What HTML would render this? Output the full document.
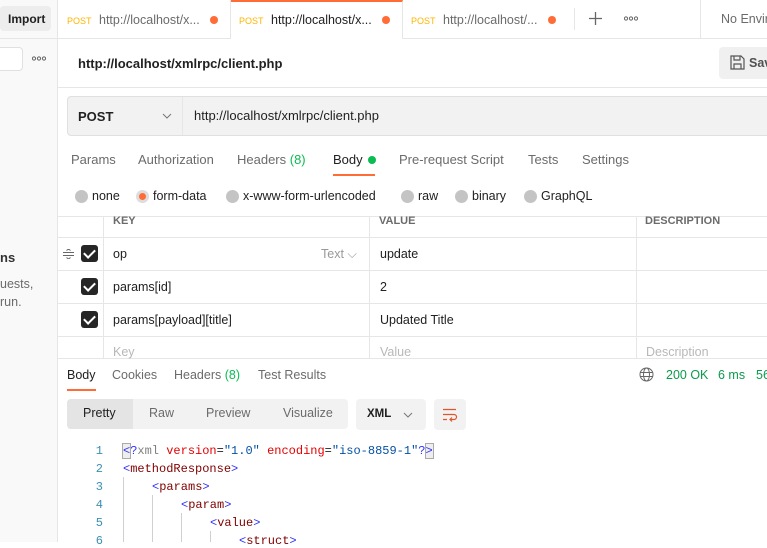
<!DOCTYPE html>
<html><head><meta charset="utf-8"><style>
*{box-sizing:border-box;margin:0;padding:0}
body{width:767px;height:542px;overflow:hidden;font-family:"Liberation Sans",sans-serif;font-size:12.5px;color:#212121;background:#fff;position:relative}
.a{position:absolute;white-space:nowrap}
.g{color:#6b6b6b}
.line{position:absolute;background:#e6e6e6}
.dot{display:inline-block;width:8px;height:8px;border-radius:50%;background:#ff6c37}
.rad{position:absolute;width:13px;height:13px;border-radius:50%;background:#c4c4c4}
.cb{position:absolute;left:81px;width:17px;height:17px;border-radius:3px;background:#262626}
.cb:after{content:"";position:absolute;left:5px;top:2px;width:5px;height:9px;border:solid #fff;border-width:0 2px 2px 0;transform:rotate(45deg)}
.mono{font-family:"Liberation Mono",monospace;font-size:12px}
.num{position:absolute;width:30px;left:73px;text-align:right;color:#3a8fb0}
.tg{color:#800000}.bl{color:#3030ff}.rd{color:#e50000}.st{color:#0451a5}
</style></head><body>
<!-- sidebar -->
<div class="a" style="left:0;top:0;width:58px;height:542px;background:#f9f9f9;border-right:1px solid #e6e6e6"></div>
<div class="a" style="left:0;top:6px;width:51px;height:25px;background:#ededed;border-radius:4px;font-weight:bold;font-size:12px;padding:6px 0 0 8px">Import</div>
<div class="line" style="left:0;top:38px;width:58px;height:1px"></div>
<div class="a" style="left:-4px;top:47px;width:27px;height:24px;border:1px solid #e0e0e0;border-radius:4px;background:#fff"></div>
<svg class="a" style="left:32px;top:56px" width="14" height="5" fill="none" stroke="#666"><circle cx="2" cy="2.5" r="1.6"/><circle cx="7" cy="2.5" r="1.6"/><circle cx="12" cy="2.5" r="1.6"/></svg>
<div class="a" style="left:0;top:250px;font-weight:bold;font-size:13px;color:#333">ns</div>
<div class="a g" style="left:0;top:277px">uests,</div>
<div class="a g" style="left:0;top:295px">run.</div>
<!-- tab bar -->
<div class="line" style="left:58px;top:38px;width:709px;height:1px"></div>
<div class="a" style="left:59px;top:0;width:172px;height:38px;border-right:1px solid #e6e6e6;padding:13px 0 0 8px"><span style="color:#ffb400;font-size:9px">POST</span> <span class="g" style="margin-left:4px">http://localhost/x...</span><span class="dot" style="margin-left:10px"></span></div>
<div class="a" style="left:231px;top:0;width:172px;height:39px;background:#fff;border-top:2px solid #ff6c37;border-right:1px solid #e6e6e6;padding:11px 0 0 8px"><span style="color:#ffb400;font-size:9px">POST</span> <span style="margin-left:4px">http://localhost/x...</span><span class="dot" style="margin-left:10px"></span></div>
<div class="a" style="left:403px;top:0;width:172px;height:38px;padding:13px 0 0 8px"><span style="color:#ffb400;font-size:9px">POST</span> <span class="g" style="margin-left:4px">http://localhost/...</span><span class="dot" style="margin-left:10px"></span></div>
<div class="line" style="left:574px;top:8px;width:1px;height:22px"></div>
<svg class="a" style="left:589px;top:12px" width="13" height="13" stroke="#666" stroke-width="1.3"><path d="M6.5 0v13M0 6.5h13"/></svg>
<svg class="a" style="left:624px;top:16px" width="14" height="5" fill="none" stroke="#666"><circle cx="2" cy="2.5" r="1.6"/><circle cx="7" cy="2.5" r="1.6"/><circle cx="12" cy="2.5" r="1.6"/></svg>
<div class="line" style="left:700px;top:0;width:1px;height:38px"></div>
<div class="a g" style="left:721px;top:12px">No Enviro</div>
<!-- title -->
<div class="a" style="left:78px;top:56px;font-weight:bold;font-size:13px">http://localhost/xmlrpc/client.php</div>
<div class="a" style="left:719px;top:47px;width:60px;height:32px;background:#f0f0f0;border-radius:4px;padding:9px 0 0 30px;font-weight:bold;color:#505050">Sav</div>
<svg class="a" style="left:730px;top:55px" width="15" height="15" viewBox="0 0 15 15" fill="none" stroke="#555" stroke-width="1.2"><path d="M1 1h10l3 3v10H1z M4 1v4h6V1 M4 14V9h7v5"/></svg>
<div class="line" style="left:58px;top:87px;width:709px;height:1px"></div>
<!-- url -->
<div class="a" style="left:67px;top:96px;width:710px;height:40px;background:#f2f2f2;border:1px solid #e0e0e0;border-radius:4px"></div>
<div class="line" style="left:182px;top:97px;width:1px;height:38px"></div>
<div class="a" style="left:78px;top:109px;font-weight:bold;font-size:13px">POST</div>
<svg class="a" style="left:162px;top:113px" width="10" height="7"><path d="M1 1l4 4 4-4" fill="none" stroke="#777"/></svg>
<div class="a" style="left:194px;top:108px;font-size:13px">http://localhost/xmlrpc/client.php</div>
<!-- req tabs -->
<div class="a g" style="left:71px;top:152px;font-size:13px">Params</div>
<div class="a g" style="left:138px;top:152px;font-size:13px">Authorization</div>
<div class="a g" style="left:237px;top:152px;font-size:13px">Headers <span style="color:#0cbb52">(8)</span></div>
<div class="a" style="left:333px;top:152px;font-size:13px">Body <span class="dot" style="background:#0cbb52;margin-left:2px"></span></div>
<div class="a" style="left:333px;top:174px;width:42px;height:2px;background:#ff6c37"></div>
<div class="a g" style="left:399px;top:152px;font-size:13px">Pre-request Script</div>
<div class="a g" style="left:528px;top:152px;font-size:13px">Tests</div>
<div class="a g" style="left:582px;top:152px;font-size:13px">Settings</div>
<!-- radios -->
<div class="rad" style="left:75px;top:190px"></div><div class="a" style="left:92px;top:189px">none</div>
<div class="rad" style="left:136px;top:190px;background:#ddd"><div style="margin:3px;width:7px;height:7px;border-radius:50%;background:#ff6c37"></div></div><div class="a" style="left:153px;top:189px">form-data</div>
<div class="rad" style="left:226px;top:190px"></div><div class="a" style="left:243px;top:189px">x-www-form-urlencoded</div>
<div class="rad" style="left:401px;top:190px"></div><div class="a" style="left:418px;top:189px">raw</div>
<div class="rad" style="left:455px;top:190px"></div><div class="a" style="left:472px;top:189px">binary</div>
<div class="rad" style="left:524px;top:190px"></div><div class="a" style="left:541px;top:189px">GraphQL</div>
<!-- table -->
<div class="line" style="left:58px;top:216px;width:709px;height:1px"></div>
<div class="line" style="left:58px;top:237px;width:709px;height:1px"></div>
<div class="line" style="left:58px;top:270px;width:709px;height:1px"></div>
<div class="line" style="left:58px;top:303px;width:709px;height:1px"></div>
<div class="line" style="left:58px;top:336px;width:709px;height:1px"></div>
<div class="line" style="left:58px;top:358px;width:709px;height:1px"></div>
<div class="line" style="left:103px;top:216px;width:1px;height:142px"></div>
<div class="line" style="left:369px;top:216px;width:1px;height:142px"></div>
<div class="line" style="left:636px;top:216px;width:1px;height:142px"></div>
<div class="a g" style="left:113px;top:215px;font-weight:bold;font-size:11px">KEY</div>
<div class="a g" style="left:379px;top:215px;font-weight:bold;font-size:11px">VALUE</div>
<div class="a g" style="left:645px;top:215px;font-weight:bold;font-size:11px">DESCRIPTION</div>
<svg class="a" style="left:63px;top:249px" width="11" height="10" fill="none" stroke="#666"><path d="M0 3.5h11M0 6.5h11M3.5 1.5L5.5 0l2 1.5M3.5 8.5l2 1.5 2-1.5"/></svg>
<div class="cb" style="top:245px"></div>
<div class="cb" style="top:278px"></div>
<div class="cb" style="top:311px"></div>
<div class="a" style="left:113px;top:247px">op</div>
<div class="a" style="left:321px;top:247px;color:#999">Text ⌵</div>
<div class="a" style="left:380px;top:247px">update</div>
<div class="a" style="left:113px;top:280px">params[id]</div>
<div class="a" style="left:380px;top:280px">2</div>
<div class="a" style="left:113px;top:313px">params[payload][title]</div>
<div class="a" style="left:380px;top:313px">Updated Title</div>
<div class="a" style="left:113px;top:345px;color:#b8b8b8">Key</div>
<div class="a" style="left:380px;top:345px;color:#b8b8b8">Value</div>
<div class="a" style="left:646px;top:345px;color:#b8b8b8">Description</div>
<!-- response tabs -->
<div class="a" style="left:67px;top:368px">Body</div>
<div class="a" style="left:67px;top:389px;width:29px;height:2px;background:#ff6c37"></div>
<div class="a g" style="left:112px;top:368px">Cookies</div>
<div class="a g" style="left:174px;top:368px">Headers <span style="color:#0cbb52">(8)</span></div>
<div class="a g" style="left:258px;top:368px">Test Results</div>
<svg class="a" style="left:639px;top:367px" width="15" height="15" viewBox="0 0 15 15" fill="none" stroke="#666" stroke-width="1"><circle cx="7.5" cy="7.5" r="6.5"/><ellipse cx="7.5" cy="7.5" rx="3" ry="6.5"/><path d="M1 5.5h13M1 9.5h13"/></svg>
<div class="a" style="left:666px;top:368px;color:#0a9b4b">200 OK</div>
<div class="a" style="left:718px;top:368px;color:#0a9b4b">6 ms</div>
<div class="a" style="left:756px;top:368px;color:#0a9b4b">56</div>
<div class="a" style="left:67px;top:399px;width:281px;height:30px;background:#f2f2f2;border-radius:4px"></div>
<div class="a" style="left:67px;top:399px;width:66px;height:30px;background:#e4e4e4;border-radius:4px 0 0 4px;padding:7px 0 0 16px">Pretty</div>
<div class="a g" style="left:149px;top:406px">Raw</div>
<div class="a g" style="left:206px;top:406px">Preview</div>
<div class="a g" style="left:283px;top:406px">Visualize</div>
<div class="a" style="left:356px;top:399px;width:70px;height:31px;background:#f2f2f2;border-radius:4px;padding:9px 0 0 11px;font-weight:bold;font-size:11.5px">XML</div>
<svg class="a" style="left:403px;top:412px" width="10" height="7"><path d="M1 1l4 4 4-4" fill="none" stroke="#777"/></svg>
<div class="a" style="left:434px;top:399px;width:32px;height:31px;background:#f2f2f2;border-radius:4px"></div>
<svg class="a" style="left:442px;top:408px" width="16" height="15" viewBox="0 0 16 15" fill="none" stroke="#e0552e" stroke-width="1.2"><path d="M1 1.5h13M1 6.5h11a2.5 2.5 0 010 5H8M10 9.5l-2 2 2 2M1 11.5h4"/></svg>
<!-- code -->
<div class="mono">
<div class="num a" style="top:444px">1</div><div class="num a" style="top:462px">2</div><div class="num a" style="top:480px">3</div><div class="num a" style="top:498px">4</div><div class="num a" style="top:516px">5</div><div class="num a" style="top:534px">6</div>
<div class="a" style="left:123px;top:444px"><span class="bl" style="outline:1px solid #aaa;background:#eee">&lt;</span><span class="bl">?</span><span style="color:#808080">xml</span> <span class="rd">version</span>=<span class="st">"1.0"</span> <span class="rd">encoding</span>=<span class="st">"iso-8859-1"</span><span class="bl">?</span><span class="bl" style="outline:1px solid #aaa;background:#eee">&gt;</span></div>
<div class="a" style="left:123px;top:462px"><span class="bl">&lt;</span><span class="tg">methodResponse</span><span class="bl">&gt;</span></div>
<div class="a" style="left:152px;top:480px"><span class="bl">&lt;</span><span class="tg">params</span><span class="bl">&gt;</span></div>
<div class="a" style="left:181px;top:498px"><span class="bl">&lt;</span><span class="tg">param</span><span class="bl">&gt;</span></div>
<div class="a" style="left:210px;top:516px"><span class="bl">&lt;</span><span class="tg">value</span><span class="bl">&gt;</span></div>
<div class="a" style="left:239px;top:534px"><span class="bl">&lt;</span><span class="tg">struct</span><span class="bl">&gt;</span></div>
</div>
<div class="line" style="left:123px;top:477px;width:1px;height:65px;background:#d0d0d0"></div>
<div class="line" style="left:152px;top:495px;width:1px;height:47px;background:#d0d0d0"></div>
<div class="line" style="left:181px;top:513px;width:1px;height:29px;background:#d0d0d0"></div>
<div class="line" style="left:210px;top:531px;width:1px;height:11px;background:#d0d0d0"></div>
</body></html>
